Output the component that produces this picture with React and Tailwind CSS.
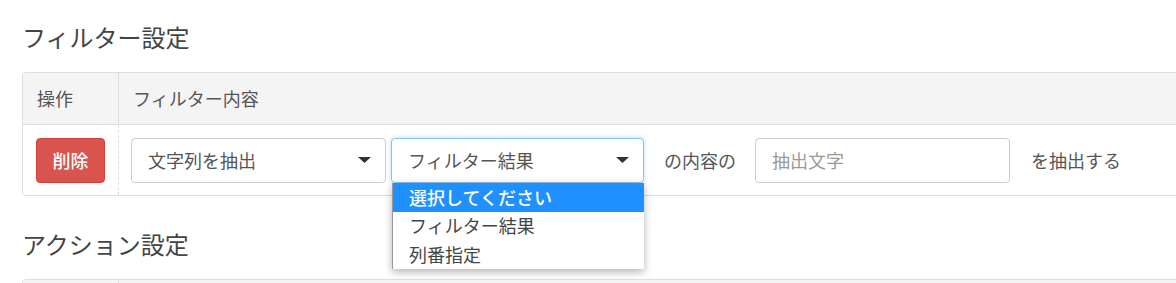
import React from "react";

const font = { fontFamily: '"Noto Sans CJK JP", "Noto Sans", sans-serif' };

function Caret() {
  return (
    <svg width="13" height="6" viewBox="0 0 13 6" className="shrink-0">
      <polygon points="0,0 13,0 6.5,6" fill="#333" />
    </svg>
  );
}

function Select({ label, focused, width, children }) {
  return (
    <div className={`relative ${width}`}>
      <div
        className={`flex h-[45px] items-center justify-between rounded-[4px] border bg-white pl-[16px] pr-[14px] text-[18px] text-[#555] ${
          focused
            ? "border-[#8cc1ee] shadow-[0_0_5px_rgba(102,175,233,0.45)]"
            : "border-[#cccccc]"
        }`}
      >
        <span className="leading-none">{label}</span>
        <Caret />
      </div>
      {children}
    </div>
  );
}

function Section({ title, children, className = "" }) {
  return (
    <div className={className}>
      <h2 className="h-[36px] text-[24px] leading-[36px] font-normal text-[#444]">
        {title}
      </h2>
      {children}
    </div>
  );
}

export default function App() {
  return (
    <div
      className="h-[283px] w-[1176px] overflow-hidden bg-white pl-[22px]"
      style={font}
    >
      <Section title="フィルター設定" className="pt-[19px]">
        <div className="mt-[17px] w-[1220px] rounded-[4px] border border-[#dddddd]">
          <div className="flex h-[52px] rounded-t-[4px] border-b border-[#dddddd] bg-[#f4f4f4] text-[18px] text-[#555]">
            <div className="flex w-[96px] items-center border-r border-[#dddddd] pl-[14px]">
              操作
            </div>
            <div className="flex items-center pl-[14px]">フィルター内容</div>
          </div>
          <div className="flex h-[70px]">
            <div className="flex w-[96px] items-center border-r border-dashed border-[#dddddd] pl-[13px]">
              <button className="h-[45px] w-[69px] rounded-[4px] border border-[#d43f3a] bg-[#d9534f] text-[18px] font-medium text-white">
                削除
              </button>
            </div>
            <div className="flex items-center pl-[12px] text-[18px] text-[#555]">
              <Select label="文字列を抽出" width="w-[255px]" />
              <div className="w-[5px]" />
              <Select label="フィルター結果" width="w-[253px]" focused>
                <div className="absolute left-[1px] top-[45px] z-10 w-[252px] border-l border-[#999] bg-white text-[18px] text-[#444] shadow-[0_3px_8px_rgba(0,0,0,0.3)]">
                  <div className="flex h-[29px] items-center bg-[#1e90ff] pl-[16px] font-medium text-white">
                    選択してください
                  </div>
                  <div className="flex h-[28px] items-center pl-[16px]">
                    フィルター結果
                  </div>
                  <div className="flex h-[29px] items-center pl-[16px]">
                    列番指定
                  </div>
                </div>
              </Select>
              <span className="ml-[20px] mr-[19px]">の内容の</span>
              <div className="flex h-[45px] w-[255px] items-center rounded-[4px] border border-[#cccccc] pl-[16px] text-[#999]">
                抽出文字
              </div>
              <span className="ml-[21px]">を抽出する</span>
            </div>
          </div>
        </div>
      </Section>
      <Section title="アクション設定" className="mt-[30px]">
        <div className="mt-[17px] w-[1220px] rounded-[4px] border border-[#dddddd]">
          <div className="flex h-[52px] rounded-t-[4px] bg-[#f4f4f4]">
            <div className="w-[96px] border-r border-[#dddddd]" />
          </div>
        </div>
      </Section>
    </div>
  );
}
